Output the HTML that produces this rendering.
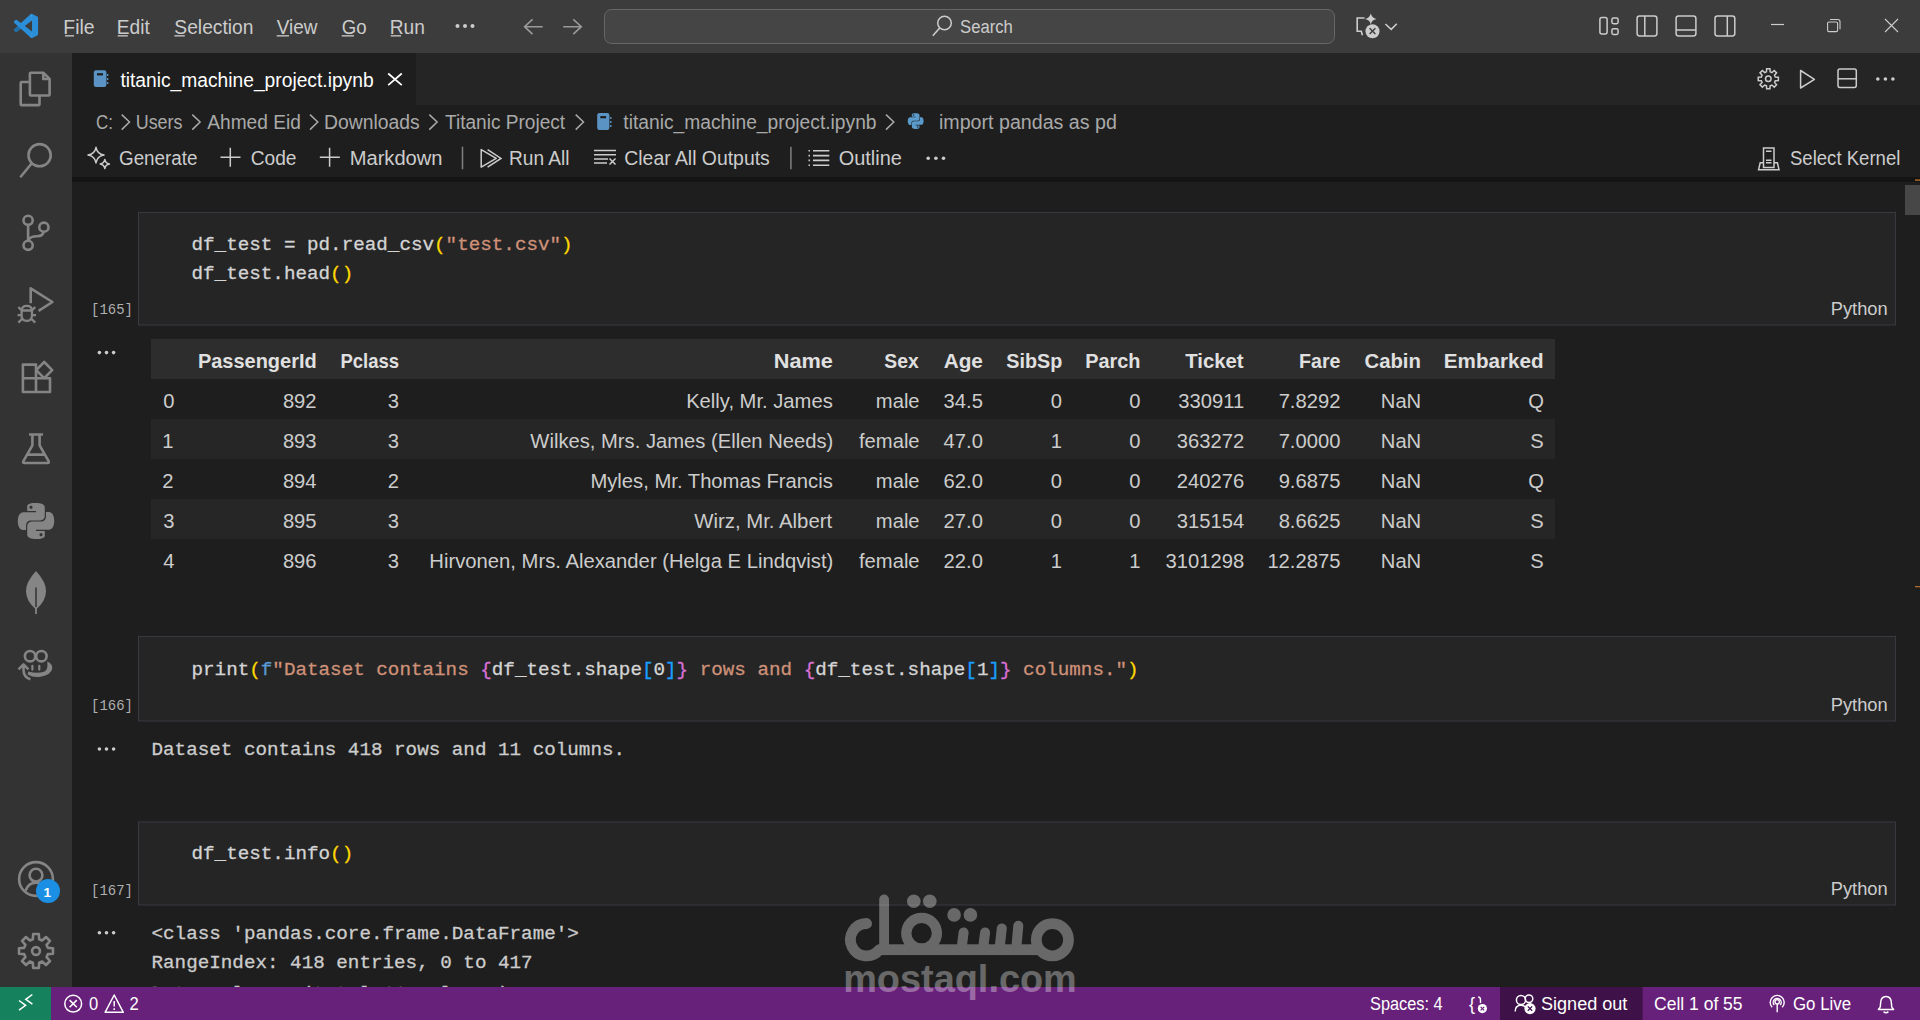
<!DOCTYPE html>
<html><head><meta charset="utf-8"><title>titanic_machine_project.ipynb</title>
<style>
html,body{margin:0;padding:0;width:1920px;height:1020px;overflow:hidden;background:#1e1e1e}
svg{position:absolute;left:0;top:0;display:block}
text{white-space:pre}
</style></head><body>
<svg width="1920" height="1020" viewBox="0 0 1920 1020">
<rect x="0" y="0" width="1920" height="53" fill="#3c3c3c"/>
<rect x="604.5" y="9.5" width="730" height="34" rx="7" fill="#454545" stroke="#676767" stroke-width="1"/>
<rect x="0" y="53" width="72" height="934" fill="#333333"/>
<rect x="72" y="53" width="1848" height="52" fill="#252526"/>
<rect x="72" y="53" width="344" height="52" fill="#1e1e1e"/>
<rect x="72" y="177" width="1848" height="5" fill="#141414"/>
<rect x="138.5" y="212.5" width="1757" height="112.5" fill="#252526" stroke="#3a3940" stroke-width="1"/>
<rect x="138.5" y="636.5" width="1757" height="84.5" fill="#252526" stroke="#3a3940" stroke-width="1"/>
<rect x="138.5" y="822.0" width="1757" height="83.0" fill="#252526" stroke="#3a3940" stroke-width="1"/>
<rect x="151" y="339" width="1404" height="40" fill="#2d2d2d"/>
<rect x="151" y="419" width="1404" height="40" fill="#262626"/>
<rect x="151" y="499" width="1404" height="40" fill="#262626"/>
<rect x="1905" y="185" width="15" height="30" fill="#474747"/>
<rect x="1915" y="179.4" width="5" height="1.4" fill="#b86e2c"/>
<rect x="1915" y="586" width="5" height="1.3" fill="#b06a2c"/>
<g font-family="Liberation Mono" font-size="19">
<text x="191.50" y="249.70" fill="#d4d4d4" stroke="#d4d4d4" stroke-width="0.3" textLength="242.55" lengthAdjust="spacingAndGlyphs">df_test = pd.read_csv</text>
<text x="434.05" y="249.70" fill="#ffd700" stroke="#ffd700" stroke-width="0.3" textLength="11.55" lengthAdjust="spacingAndGlyphs">(</text>
<text x="445.60" y="249.70" fill="#ce9178" stroke="#ce9178" stroke-width="0.3" textLength="115.50" lengthAdjust="spacingAndGlyphs">"test.csv"</text>
<text x="561.10" y="249.70" fill="#ffd700" stroke="#ffd700" stroke-width="0.3" textLength="11.55" lengthAdjust="spacingAndGlyphs">)</text>
<text x="191.50" y="278.70" fill="#d4d4d4" stroke="#d4d4d4" stroke-width="0.3" textLength="138.60" lengthAdjust="spacingAndGlyphs">df_test.head</text>
<text x="330.10" y="278.70" fill="#ffd700" stroke="#ffd700" stroke-width="0.3" textLength="23.10" lengthAdjust="spacingAndGlyphs">()</text>
<text x="191.50" y="674.70" fill="#d4d4d4" stroke="#d4d4d4" stroke-width="0.3" textLength="57.75" lengthAdjust="spacingAndGlyphs">print</text>
<text x="249.25" y="674.70" fill="#ffd700" stroke="#ffd700" stroke-width="0.3" textLength="11.55" lengthAdjust="spacingAndGlyphs">(</text>
<text x="260.80" y="674.70" fill="#569cd6" stroke="#569cd6" stroke-width="0.3" textLength="11.55" lengthAdjust="spacingAndGlyphs">f</text>
<text x="272.35" y="674.70" fill="#ce9178" stroke="#ce9178" stroke-width="0.3" textLength="207.90" lengthAdjust="spacingAndGlyphs">"Dataset contains </text>
<text x="480.25" y="674.70" fill="#da70d6" stroke="#da70d6" stroke-width="0.3" textLength="11.55" lengthAdjust="spacingAndGlyphs">{</text>
<text x="491.80" y="674.70" fill="#d4d4d4" stroke="#d4d4d4" stroke-width="0.3" textLength="150.15" lengthAdjust="spacingAndGlyphs">df_test.shape</text>
<text x="641.95" y="674.70" fill="#179fff" stroke="#179fff" stroke-width="0.3" textLength="11.55" lengthAdjust="spacingAndGlyphs">[</text>
<text x="653.50" y="674.70" fill="#d4d4d4" stroke="#d4d4d4" stroke-width="0.3" textLength="11.55" lengthAdjust="spacingAndGlyphs">0</text>
<text x="665.05" y="674.70" fill="#179fff" stroke="#179fff" stroke-width="0.3" textLength="11.55" lengthAdjust="spacingAndGlyphs">]</text>
<text x="676.60" y="674.70" fill="#da70d6" stroke="#da70d6" stroke-width="0.3" textLength="11.55" lengthAdjust="spacingAndGlyphs">}</text>
<text x="688.15" y="674.70" fill="#ce9178" stroke="#ce9178" stroke-width="0.3" textLength="115.50" lengthAdjust="spacingAndGlyphs"> rows and </text>
<text x="803.65" y="674.70" fill="#da70d6" stroke="#da70d6" stroke-width="0.3" textLength="11.55" lengthAdjust="spacingAndGlyphs">{</text>
<text x="815.20" y="674.70" fill="#d4d4d4" stroke="#d4d4d4" stroke-width="0.3" textLength="150.15" lengthAdjust="spacingAndGlyphs">df_test.shape</text>
<text x="965.35" y="674.70" fill="#179fff" stroke="#179fff" stroke-width="0.3" textLength="11.55" lengthAdjust="spacingAndGlyphs">[</text>
<text x="976.90" y="674.70" fill="#d4d4d4" stroke="#d4d4d4" stroke-width="0.3" textLength="11.55" lengthAdjust="spacingAndGlyphs">1</text>
<text x="988.45" y="674.70" fill="#179fff" stroke="#179fff" stroke-width="0.3" textLength="11.55" lengthAdjust="spacingAndGlyphs">]</text>
<text x="1000.00" y="674.70" fill="#da70d6" stroke="#da70d6" stroke-width="0.3" textLength="11.55" lengthAdjust="spacingAndGlyphs">}</text>
<text x="1011.55" y="674.70" fill="#ce9178" stroke="#ce9178" stroke-width="0.3" textLength="115.50" lengthAdjust="spacingAndGlyphs"> columns."</text>
<text x="1127.05" y="674.70" fill="#ffd700" stroke="#ffd700" stroke-width="0.3" textLength="11.55" lengthAdjust="spacingAndGlyphs">)</text>
<text x="191.50" y="859.20" fill="#d4d4d4" stroke="#d4d4d4" stroke-width="0.3" textLength="138.60" lengthAdjust="spacingAndGlyphs">df_test.info</text>
<text x="330.10" y="859.20" fill="#ffd700" stroke="#ffd700" stroke-width="0.3" textLength="23.10" lengthAdjust="spacingAndGlyphs">()</text>
<text x="151.50" y="755.20" fill="#cccccc" stroke="#cccccc" stroke-width="0.3" textLength="473.55" lengthAdjust="spacingAndGlyphs">Dataset contains 418 rows and 11 columns.</text>
<text x="151.50" y="938.80" fill="#cccccc" stroke="#cccccc" stroke-width="0.3" textLength="427.35" lengthAdjust="spacingAndGlyphs">&lt;class 'pandas.core.frame.DataFrame'&gt;</text>
<text x="151.50" y="967.60" fill="#cccccc" stroke="#cccccc" stroke-width="0.3" textLength="381.15" lengthAdjust="spacingAndGlyphs">RangeIndex: 418 entries, 0 to 417</text>
<text x="151.50" y="998.50" fill="#cccccc" stroke="#cccccc" stroke-width="0.3" textLength="369.60" lengthAdjust="spacingAndGlyphs">Data columns (total 11 columns):</text>
<text x="91.08" y="314.00" fill="#b0b0b0" font-size="14.5" textLength="41.82" lengthAdjust="spacingAndGlyphs">[165]</text>
<text x="91.08" y="710.00" fill="#b0b0b0" font-size="14.5" textLength="41.82" lengthAdjust="spacingAndGlyphs">[166]</text>
<text x="91.08" y="894.50" fill="#b0b0b0" font-size="14.5" textLength="41.82" lengthAdjust="spacingAndGlyphs">[167]</text>
</g>
<rect x="0" y="987" width="1920" height="33" fill="#68217a"/><rect x="0" y="987" width="51" height="33" fill="#16825d"/><rect x="1500" y="987" width="142.6" height="33" fill="#3e1148"/>
<g transform="translate(13.8,13.8) scale(0.243)"><path d="M96.46 10.8L75.86.87a6.23 6.23 0 0 0-7.1 1.2L29.33 38.04 12.15 25.01a4.16 4.16 0 0 0-5.32.24L1.3 30.25a4.16 4.16 0 0 0 0 6.16L16.2 50 1.3 63.59a4.16 4.16 0 0 0 0 6.16l5.52 5.02a4.16 4.16 0 0 0 5.32.24l17.18-13.03 39.43 35.97a6.23 6.23 0 0 0 7.1 1.2l20.6-9.92a6.24 6.24 0 0 0 3.54-5.62V16.42a6.24 6.24 0 0 0-3.54-5.62zM75.02 72.7L45.1 50l29.92-22.7v45.4z" fill="#2a8fd8"/><path d="M16.2 50 L1.3 63.59 a4.16 4.16 0 0 0 0 6.16 l5.52 5.02 a4.16 4.16 0 0 0 5.32.24 L29.33 61.96 Z" fill="#000" opacity="0.22"/><path d="M75.86.87 L68.76 2.07 L75.02 27.3 V72.7 L68.76 97.93 L75.86 99.13 Z" fill="#fff" opacity="0.08"/></g>
<circle cx="457.5" cy="26" r="2" fill="#cccccc"/>
<circle cx="465" cy="26" r="2" fill="#cccccc"/>
<circle cx="472.5" cy="26" r="2" fill="#cccccc"/>
<rect x="65.0" y="35.2" width="9.0" height="1.3" fill="#cccccc"/>
<rect x="117.7" y="35.2" width="10.1" height="1.3" fill="#cccccc"/>
<rect x="174.4" y="35.2" width="10.4" height="1.3" fill="#cccccc"/>
<rect x="276.7" y="35.2" width="12.3" height="1.3" fill="#cccccc"/>
<rect x="341.7" y="35.2" width="12.3" height="1.3" fill="#cccccc"/>
<rect x="390.7" y="35.2" width="10.3" height="1.3" fill="#cccccc"/>
<path d="M532.5 19.3 L524.6 26.7 L532.5 34.2 M524.6 26.7 H542.7" stroke="#9a9a9a" stroke-width="1.6" fill="none"/>
<path d="M573.3 19.3 L581.3 26.7 L573.3 34.2 M581.3 26.7 H563.2" stroke="#9a9a9a" stroke-width="1.6" fill="none"/>
<circle cx="944.5" cy="23" r="6.8" stroke="#cccccc" stroke-width="1.5" fill="none"/><path d="M939.7 28 L932.8 35.8" stroke="#cccccc" stroke-width="1.6" fill="none"/>
<path d="M1364.5 18 H1357.2 V31.3 H1361.3 L1362.4 35.3" stroke="#cccccc" stroke-width="1.6" fill="none"/>
<path d="M1370.8 13.2 Q1371.6 18.1 1376.6 18.9 Q1371.6 19.7 1370.8 24.6 Q1370 19.7 1365 18.9 Q1370 18.1 1370.8 13.2Z" fill="#cccccc"/>
<circle cx="1372.5" cy="31.2" r="7" fill="#cccccc"/><path d="M1369.6 28.3 L1375.4 34.1 M1375.4 28.3 L1369.6 34.1" stroke="#3c3c3c" stroke-width="1.4"/>
<path d="M1385.4 24 L1391.2 29.4 L1396.8 23.7" stroke="#cccccc" stroke-width="1.5" fill="none"/>
<rect x="1599.9" y="17.6" width="7.2" height="16.4" rx="2" stroke="#cccccc" stroke-width="1.5" fill="none"/>
<rect x="1611.9" y="18.1" width="6.2" height="5.6" rx="1.6" stroke="#cccccc" stroke-width="1.5" fill="none"/>
<rect x="1611.9" y="28.8" width="6.2" height="5.6" rx="1.6" stroke="#cccccc" stroke-width="1.5" fill="none"/>
<rect x="1637.1" y="16.1" width="19.8" height="19.8" rx="2.4" stroke="#cccccc" stroke-width="1.5" fill="none"/><path d="M1644.8 16.1 V35.9" stroke="#cccccc" stroke-width="1.5" fill="none"/>
<rect x="1676.1" y="16.1" width="19.8" height="19.8" rx="2.4" stroke="#cccccc" stroke-width="1.5" fill="none"/><path d="M1676.1 30 H1695.9" stroke="#cccccc" stroke-width="1.5" fill="none"/>
<rect x="1715" y="16.1" width="19.8" height="19.8" rx="2.4" stroke="#cccccc" stroke-width="1.5" fill="none"/><path d="M1727.3 16.1 V35.9" stroke="#cccccc" stroke-width="1.5" fill="none"/>
<path d="M1771 24.5 H1784" stroke="#cccccc" stroke-width="1.2"/>
<rect x="1827.6" y="22" width="10" height="9.6" rx="1.3" stroke="#cccccc" stroke-width="1.1" fill="none"/><path d="M1830 19.5 H1837.8 Q1840 19.5 1840 21.7 V29.3" stroke="#cccccc" stroke-width="1.1" fill="none"/>
<path d="M1885 19 L1898 32 M1898 19 L1885 32" stroke="#cccccc" stroke-width="1.1"/>
<path d="M28.9 82 H21.6 Q20.7 82 20.7 83 V104.2 Q20.7 105.1 21.6 105.1 H38.6 Q39.5 105.1 39.5 104.2 V96" stroke="#858585" stroke-width="2.6" fill="none" stroke-linejoin="round"/>
<path d="M30.8 72.8 H43.6 L49.6 78.8 V94.5 Q49.6 95.5 48.6 95.5 H30.8 Q29.9 95.5 29.9 94.5 V73.8 Q29.9 72.8 30.8 72.8Z M43.3 72.8 V79 H49.6" stroke="#858585" stroke-width="2.6" fill="none" stroke-linejoin="round"/>
<circle cx="39.6" cy="155.2" r="11.1" stroke="#858585" stroke-width="2.6" fill="none" stroke-linejoin="round"/><path d="M31.6 163.5 L20.3 177.3" stroke="#858585" stroke-width="2.6" fill="none" stroke-linejoin="round"/>
<circle cx="28.1" cy="220.3" r="4.6" stroke="#858585" stroke-width="2.6" fill="none" stroke-linejoin="round"/><circle cx="43.9" cy="227.2" r="4.6" stroke="#858585" stroke-width="2.6" fill="none" stroke-linejoin="round"/><circle cx="28.1" cy="245.3" r="4.6" stroke="#858585" stroke-width="2.6" fill="none" stroke-linejoin="round"/>
<path d="M28.1 224.9 V240.7 M43.6 231.8 Q43 236.2 37 236.2 Q30 236.2 28.5 240.2" stroke="#858585" stroke-width="2.6" fill="none" stroke-linejoin="round"/>
<path d="M30.7 303.2 V288.3 L52.4 302 L38.6 310.8" stroke="#858585" stroke-width="2.6" fill="none" stroke-linejoin="round"/>
<path d="M21.8 310.5 Q21.8 305.9 26.8 305.9 Q31.8 305.9 31.8 310.5 M26.8 320.9 Q21.2 320.9 21.6 314.4 L21.7 310.5 H31.9 L32 314.4 Q32.3 320.9 26.8 320.9Z M18.4 307 L21.6 310.4 M35.2 307 L32 310.4 M17.6 315.2 H21.6 M32 315.2 H36 M18.4 322.6 L22.2 318.8 M35.2 322.6 L31.4 318.8" stroke="#858585" stroke-width="2.3" fill="none"/>
<path d="M22.9 364.6 H36 V392 H22.9Z M22.9 378.3 H50 V392 H36" stroke="#858585" stroke-width="2.6" fill="none" stroke-linejoin="round"/>
<path d="M44.2 362 L52.2 370.1 L44.2 378.1 L36.2 370.1Z" stroke="#858585" stroke-width="2.6" fill="none" stroke-linejoin="round"/>
<path d="M29 434.5 H43 M32.4 434.5 V445.3 L23.4 461.2 Q22.5 463 24.5 463 H47.5 Q49.5 463 48.6 461.2 L39.6 445.3 V434.5 M26.6 454.6 H45.5" stroke="#858585" stroke-width="2.6" fill="none" stroke-linejoin="round"/>
<g transform="translate(17.9,502.9) scale(1.5083)"><path d="M14.25.18l.9.2.73.26.59.3.45.32.34.34.25.34.16.33.1.3.04.26.02.2-.01.13V8.5l-.05.63-.13.55-.21.46-.26.38-.3.31-.33.25-.35.19-.35.14-.33.1-.3.07-.26.04-.21.02H8.77l-.69.05-.59.14-.5.22-.41.27-.33.32-.27.35-.2.36-.15.37-.1.35-.07.32-.04.27-.02.21v3.06H3.17l-.21-.03-.28-.07-.32-.12-.35-.18-.36-.26-.36-.36-.35-.46-.32-.59-.28-.73-.21-.88-.14-1.05-.05-1.23.06-1.22.16-1.04.24-.87.32-.71.36-.57.4-.44.42-.33.42-.24.4-.16.36-.1.32-.05.24-.01h.16l.06.01h8.16v-.83H6.18l-.01-2.75-.02-.37.05-.34.11-.31.17-.28.25-.26.31-.23.38-.2.44-.18.51-.15.58-.12.64-.1.71-.06.77-.04.84-.02 1.27.05zm-6.3 1.98l-.23.33-.08.41.08.41.23.34.33.22.41.09.41-.09.33-.22.23-.34.08-.41-.08-.41-.23-.33-.33-.22-.41-.09-.41.09zm13.09 3.95l.28.06.32.12.35.18.36.27.36.35.35.47.32.59.28.73.21.88.14 1.04.05 1.23-.06 1.23-.16 1.04-.24.86-.32.71-.36.57-.4.45-.42.33-.42.24-.4.16-.36.09-.32.05-.24.02-.16-.01h-8.22v.82h5.84l.01 2.76.02.36-.05.34-.11.31-.17.29-.25.25-.31.24-.38.2-.44.17-.51.15-.58.13-.64.09-.71.07-.77.04-.84.01-1.27-.04-1.07-.14-.9-.2-.73-.25-.59-.3-.45-.33-.34-.34-.25-.34-.16-.33-.1-.3-.04-.25-.02-.2.01-.13v-5.34l.05-.64.13-.54.21-.46.26-.38.3-.32.33-.24.35-.2.35-.14.33-.1.3-.06.26-.04.21-.02.13-.01h5.84l.69-.05.59-.14.5-.21.41-.28.33-.32.27-.35.2-.36.15-.36.1-.35.07-.32.04-.28.02-.21V6.07h2.09l.14.01zm-6.47 14.25l-.23.33-.08.41.08.41.23.33.33.23.41.08.41-.08.33-.23.23-.33.08-.41-.08-.41-.23-.33-.33-.23-.41-.08-.41.08z" fill="#858585"/></g>
<path d="M36 571.1 Q46.2 582 46 591.5 Q45.7 601 36.6 608.9 H35.4 Q26.3 601 26 591.5 Q25.8 582 36 571.1Z" fill="#858585"/><path d="M36 587.5 V607.5" stroke="#333333" stroke-width="1.5"/><path d="M36 607 V614" stroke="#858585" stroke-width="1.8"/>
<circle cx="30.1" cy="656.2" r="5.2" stroke="#858585" stroke-width="2.6" fill="none" stroke-linejoin="round"/><circle cx="41.4" cy="656.2" r="5.2" stroke="#858585" stroke-width="2.6" fill="none" stroke-linejoin="round"/>
<path d="M47.2 661.4 Q52.8 663.6 52.2 668.6 Q51.4 674.8 40.5 676.8 Q33.5 677.8 27.6 674.4 L28.4 671.6 Q37.5 674.2 44.6 671.4 Q48.4 669.4 47.2 661.4Z" fill="#858585"/>
<path d="M32.4 665.8 V669.6 M39.3 665.8 V669.6" stroke="#858585" stroke-width="2.2" stroke-linecap="round"/>
<path d="M18.6 669.4 L23.5 664.4 L28.4 669.4 M23.5 665 V670 Q23.8 677.6 30.4 679.2" stroke="#858585" stroke-width="2.6" fill="none" stroke-linejoin="round"/>
<circle cx="36" cy="879" r="16.9" stroke="#858585" stroke-width="2.6" fill="none" stroke-linejoin="round"/><circle cx="36" cy="875.2" r="6.4" stroke="#858585" stroke-width="2.6" fill="none" stroke-linejoin="round"/><path d="M25.5 890.7 Q28.5 882.6 36 882.6 Q43.5 882.6 46.5 890.7" stroke="#858585" stroke-width="2.6" fill="none" stroke-linejoin="round"/>
<circle cx="48" cy="891" r="12" fill="#1a8fe3"/>
<path d="M32.87 939.21 L33.18 934.03 L38.82 934.03 L39.13 939.21 L42.13 940.45 L46.00 937.01 L49.99 941.00 L46.55 944.87 L47.79 947.87 L52.97 948.18 L52.97 953.82 L47.79 954.13 L46.55 957.13 L49.99 961.00 L46.00 964.99 L42.13 961.55 L39.13 962.79 L38.82 967.97 L33.18 967.97 L32.87 962.79 L29.87 961.55 L26.00 964.99 L22.01 961.00 L25.45 957.13 L24.21 954.13 L19.03 953.82 L19.03 948.18 L24.21 947.87 L25.45 944.87 L22.01 941.00 L26.00 937.01 L29.87 940.45 Z" stroke="#858585" stroke-width="2.6" fill="none" stroke-linejoin="round"/><circle cx="36" cy="951" r="3.9" stroke="#858585" stroke-width="2.6" fill="none" stroke-linejoin="round"/>
<rect x="93.8" y="70.2" width="12.6" height="16.8" rx="2.2" fill="#5a93c4"/><rect x="97" y="73.2" width="6" height="2.2" fill="#1e1e1e"/>
<path d="M107.6 74 V76 M107.6 78 V80 M107.6 82 V84" stroke="#5a93c4" stroke-width="1.4"/>
<path d="M388.2 73.5 L401.8 85.1 M401.8 73.5 L388.2 85.1" stroke="#ffffff" stroke-width="1.7"/>
<path d="M1766.45 71.84 L1766.63 68.74 L1769.97 68.74 L1770.15 71.84 L1771.92 72.57 L1774.23 70.50 L1776.60 72.87 L1774.53 75.18 L1775.26 76.95 L1778.36 77.13 L1778.36 80.47 L1775.26 80.65 L1774.53 82.42 L1776.60 84.73 L1774.23 87.10 L1771.92 85.03 L1770.15 85.76 L1769.97 88.86 L1766.63 88.86 L1766.45 85.76 L1764.68 85.03 L1762.37 87.10 L1760.00 84.73 L1762.07 82.42 L1761.34 80.65 L1758.24 80.47 L1758.24 77.13 L1761.34 76.95 L1762.07 75.18 L1760.00 72.87 L1762.37 70.50 L1764.68 72.57 Z" stroke="#cccccc" stroke-width="1.5" fill="none"/><circle cx="1768.3" cy="78.8" r="2.8" stroke="#cccccc" stroke-width="1.5" fill="none"/>
<path d="M1800.6 70.5 L1814.4 79.3 L1800.6 88 Z" stroke="#cccccc" stroke-width="1.5" fill="none" stroke-linejoin="round"/>
<rect x="1838" y="69.1" width="18.3" height="18.3" rx="1.8" stroke="#cccccc" stroke-width="1.5" fill="none"/><path d="M1838 78.8 H1856.3" stroke="#cccccc" stroke-width="1.5"/>
<circle cx="1877.8" cy="79" r="1.8" fill="#cccccc"/>
<circle cx="1885.4" cy="79" r="1.8" fill="#cccccc"/>
<circle cx="1892.9" cy="79" r="1.8" fill="#cccccc"/>
<path d="M121.7 114.6 L129.5 122 L121.7 129.6" stroke="#a9a9a9" stroke-width="1.5" fill="none"/>
<path d="M192.3 114.6 L200.1 122 L192.3 129.6" stroke="#a9a9a9" stroke-width="1.5" fill="none"/>
<path d="M310.0 114.6 L317.8 122 L310.0 129.6" stroke="#a9a9a9" stroke-width="1.5" fill="none"/>
<path d="M429.3 114.6 L437.1 122 L429.3 129.6" stroke="#a9a9a9" stroke-width="1.5" fill="none"/>
<path d="M575.7 114.6 L583.5 122 L575.7 129.6" stroke="#a9a9a9" stroke-width="1.5" fill="none"/>
<path d="M886.0 114.6 L893.8 122 L886.0 129.6" stroke="#a9a9a9" stroke-width="1.5" fill="none"/>
<rect x="597.2" y="112.9" width="12.2" height="17" rx="2.2" fill="#5a93c4"/><rect x="600.3" y="116.1" width="5.8" height="2.2" fill="#1e1e1e"/>
<path d="M610.8 117 V119 M610.8 121 V123 M610.8 125 V127" stroke="#5a93c4" stroke-width="1.4"/>
<g transform="translate(907.8,113.2) scale(0.655)"><path d="M14.25.18l.9.2.73.26.59.3.45.32.34.34.25.34.16.33.1.3.04.26.02.2-.01.13V8.5l-.05.63-.13.55-.21.46-.26.38-.3.31-.33.25-.35.19-.35.14-.33.1-.3.07-.26.04-.21.02H8.77l-.69.05-.59.14-.5.22-.41.27-.33.32-.27.35-.2.36-.15.37-.1.35-.07.32-.04.27-.02.21v3.06H3.17l-.21-.03-.28-.07-.32-.12-.35-.18-.36-.26-.36-.36-.35-.46-.32-.59-.28-.73-.21-.88-.14-1.05-.05-1.23.06-1.22.16-1.04.24-.87.32-.71.36-.57.4-.44.42-.33.42-.24.4-.16.36-.1.32-.05.24-.01h.16l.06.01h8.16v-.83H6.18l-.01-2.75-.02-.37.05-.34.11-.31.17-.28.25-.26.31-.23.38-.2.44-.18.51-.15.58-.12.64-.1.71-.06.77-.04.84-.02 1.27.05zm-6.3 1.98l-.23.33-.08.41.08.41.23.34.33.22.41.09.41-.09.33-.22.23-.34.08-.41-.08-.41-.23-.33-.33-.22-.41-.09-.41.09zm13.09 3.95l.28.06.32.12.35.18.36.27.36.35.35.47.32.59.28.73.21.88.14 1.04.05 1.23-.06 1.23-.16 1.04-.24.86-.32.71-.36.57-.4.45-.42.33-.42.24-.4.16-.36.09-.32.05-.24.02-.16-.01h-8.22v.82h5.84l.01 2.76.02.36-.05.34-.11.31-.17.29-.25.25-.31.24-.38.2-.44.17-.51.15-.58.13-.64.09-.71.07-.77.04-.84.01-1.27-.04-1.07-.14-.9-.2-.73-.25-.59-.3-.45-.33-.34-.34-.25-.34-.16-.33-.1-.3-.04-.25-.02-.2.01-.13v-5.34l.05-.64.13-.54.21-.46.26-.38.3-.32.33-.24.35-.2.35-.14.33-.1.3-.06.26-.04.21-.02.13-.01h5.84l.69-.05.59-.14.5-.21.41-.28.33-.32.27-.35.2-.36.15-.36.1-.35.07-.32.04-.28.02-.21V6.07h2.09l.14.01zm-6.47 14.25l-.23.33-.08.41.08.41.23.33.33.23.41.08.41-.08.33-.23.23-.33.08-.41-.08-.41-.23-.33-.33-.23-.41-.08-.41.08z" fill="#5a9bcc"/></g>
<path d="M96 147.3 Q97.2 153.9 104 155.1 Q97.2 156.3 96 162.9 Q94.8 156.3 88 155.1 Q94.8 153.9 96 147.3Z" stroke="#cccccc" stroke-width="1.5" fill="none" stroke-linejoin="round"/>
<path d="M104.8 159.4 Q105.4 163.3 109.4 164 Q105.4 164.7 104.8 168.6 Q104.2 164.7 100.2 164 Q104.2 163.3 104.8 159.4Z" stroke="#cccccc" stroke-width="1.5" fill="none" stroke-linejoin="round"/>
<path d="M230.3 147.7 V166.7 M220.5 157.2 H240.5" stroke="#cccccc" stroke-width="1.5"/>
<path d="M329.6 147.7 V166.7 M319.8 157.2 H339.8" stroke="#cccccc" stroke-width="1.5"/>
<path d="M462.5 146.7 V169.3" stroke="#808080" stroke-width="1.5"/>
<path d="M790.9 146.7 V169.3" stroke="#808080" stroke-width="1.5"/>
<path d="M481.2 149.6 L496.2 158.4 L481.2 167.2 Z" stroke="#cccccc" stroke-width="1.5" fill="none" stroke-linejoin="round"/><path d="M487.6 149.6 L501 158.4 L487.6 167.2" stroke="#cccccc" stroke-width="1.5" fill="none"/>
<path d="M594 150.5 H616 M594 154.7 H616 M594 158.9 H608 M594 163.1 H607 M609.5 158.5 L615.5 164.5 M615.5 158.5 L609.5 164.5" stroke="#cccccc" stroke-width="1.5" fill="none"/>
<path d="M808.5 150.8 H810 M813 150.8 H829.3 M808.5 155.6 H810 M813 155.6 H829.3 M808.5 160.4 H810 M813 160.4 H829.3 M808.5 165.2 H810 M813 165.2 H829.3" stroke="#cccccc" stroke-width="1.6"/>
<circle cx="928.2" cy="158.3" r="1.8" fill="#cccccc"/>
<circle cx="935.9" cy="158.3" r="1.8" fill="#cccccc"/>
<circle cx="943.5" cy="158.3" r="1.8" fill="#cccccc"/>
<path d="M1763.5 148 H1774 V167.5 H1763.5 Z M1766 151.2 H1771.5 M1766 160.2 H1771.5 M1766 162.8 H1771.5 M1763.5 162.8 H1760.2 L1758.6 169.7 H1779 L1777.4 162.8 H1774" stroke="#cccccc" stroke-width="1.5" fill="none"/>
<circle cx="99.4" cy="352.6" r="1.8" fill="#cccccc"/>
<circle cx="106.5" cy="352.6" r="1.8" fill="#cccccc"/>
<circle cx="113.6" cy="352.6" r="1.8" fill="#cccccc"/>
<circle cx="99.4" cy="749" r="1.8" fill="#cccccc"/>
<circle cx="106.5" cy="749" r="1.8" fill="#cccccc"/>
<circle cx="113.6" cy="749" r="1.8" fill="#cccccc"/>
<circle cx="99.4" cy="932.7" r="1.8" fill="#cccccc"/>
<circle cx="106.5" cy="932.7" r="1.8" fill="#cccccc"/>
<circle cx="113.6" cy="932.7" r="1.8" fill="#cccccc"/>
<path d="M19 1000.5 L25.6 1005.3 L19 1010.2 M32.4 994.5 L25.8 999.3 L32.4 1004.1" stroke="#ffffff" stroke-width="1.5" fill="none"/>
<circle cx="73.2" cy="1003.7" r="8.4" stroke="#ffffff" stroke-width="1.5" fill="none"/><path d="M69.6 1000.1 L76.8 1007.3 M76.8 1000.1 L69.6 1007.3" stroke="#ffffff" stroke-width="1.5"/>
<path d="M114.2 995 L123.3 1012.3 H105.1 Z" stroke="#ffffff" stroke-width="1.5" fill="none" stroke-linejoin="round"/><path d="M114.2 1001 V1006.5 M114.2 1008.3 V1010" stroke="#ffffff" stroke-width="1.5"/>
<text x="1469" y="1010.4" font-family="Liberation Sans" font-size="18" fill="#ffffff">{</text><path d="M1478.2 997 Q1480.5 997 1480.5 1000 V1003" stroke="#ffffff" stroke-width="1.4" fill="none"/><circle cx="1482.4" cy="1008.6" r="4.6" fill="#ffffff"/><path d="M1480.6 1006.8 L1484.2 1010.4 M1484.2 1006.8 L1480.6 1010.4" stroke="#68217a" stroke-width="1.2"/>
<circle cx="1521" cy="1000" r="4.6" stroke="#ffffff" stroke-width="1.5" fill="none"/><circle cx="1529" cy="998.8" r="3.8" stroke="#ffffff" stroke-width="1.5" fill="none"/><path d="M1515.2 1011.5 Q1515.2 1005.2 1521 1005.2 Q1524 1005.2 1525.5 1007" stroke="#ffffff" stroke-width="1.5" fill="none"/><circle cx="1530" cy="1008.6" r="5.6" fill="#ffffff"/><path d="M1527.8 1006.4 L1532.2 1010.8 M1532.2 1006.4 L1527.8 1010.8" stroke="#3b1050" stroke-width="1.3"/>
<circle cx="1777.2" cy="1001.8" r="2.2" stroke="#ffffff" stroke-width="1.4" fill="none"/><path d="M1772.2 1007.3 A7 7 0 1 1 1782.2 1007.3 M1774.2 1005 A4 4 0 1 1 1780.2 1005 M1777.2 1004 V1012.2" stroke="#ffffff" stroke-width="1.4" fill="none"/>
<path d="M1880 1007.5 Q1880.5 1006.5 1880.5 1004 Q1880.5 996.5 1886 996.5 Q1891.5 996.5 1891.5 1004 Q1891.5 1006.5 1892 1007.5 L1893.6 1009.5 H1878.4Z M1883.6 1011.6 Q1886 1014 1888.4 1011.6" stroke="#ffffff" stroke-width="1.5" fill="none" stroke-linejoin="round"/>
<text x="43.6" y="897" font-family="Liberation Sans" font-weight="bold" font-size="13.5" fill="#ffffff">1</text>
<text x="63.31" y="33.75" font-family='Liberation Sans' font-size="19.5" font-weight="normal" fill="#cccccc" textLength="31.23" lengthAdjust="spacingAndGlyphs">File</text>
<text x="116.72" y="33.75" font-family='Liberation Sans' font-size="19.5" font-weight="normal" fill="#cccccc" textLength="33.01" lengthAdjust="spacingAndGlyphs">Edit</text>
<text x="174.30" y="33.75" font-family='Liberation Sans' font-size="19.5" font-weight="normal" fill="#cccccc" textLength="79.23" lengthAdjust="spacingAndGlyphs">Selection</text>
<text x="276.70" y="33.75" font-family='Liberation Sans' font-size="19.5" font-weight="normal" fill="#cccccc" textLength="40.71" lengthAdjust="spacingAndGlyphs">View</text>
<text x="341.70" y="33.75" font-family='Liberation Sans' font-size="19.5" font-weight="normal" fill="#cccccc" textLength="24.85" lengthAdjust="spacingAndGlyphs">Go</text>
<text x="389.72" y="33.75" font-family='Liberation Sans' font-size="19.5" font-weight="normal" fill="#cccccc" textLength="35.11" lengthAdjust="spacingAndGlyphs">Run</text>
<text x="960.10" y="32.90" font-family='Liberation Sans' font-size="18" font-weight="normal" fill="#cccccc" textLength="52.73" lengthAdjust="spacingAndGlyphs">Search</text>
<text x="120.40" y="87.00" font-family='Liberation Sans' font-size="19.5" font-weight="normal" fill="#ffffff" textLength="253.20" lengthAdjust="spacingAndGlyphs">titanic_machine_project.ipynb</text>
<text x="96.00" y="129.30" font-family='Liberation Sans' font-size="19.5" font-weight="normal" fill="#a9a9a9" textLength="16.93" lengthAdjust="spacingAndGlyphs">C:</text>
<text x="135.78" y="129.30" font-family='Liberation Sans' font-size="19.5" font-weight="normal" fill="#a9a9a9" textLength="46.69" lengthAdjust="spacingAndGlyphs">Users</text>
<text x="207.30" y="129.30" font-family='Liberation Sans' font-size="19.5" font-weight="normal" fill="#a9a9a9" textLength="93.53" lengthAdjust="spacingAndGlyphs">Ahmed Eid</text>
<text x="324.01" y="129.30" font-family='Liberation Sans' font-size="19.5" font-weight="normal" fill="#a9a9a9" textLength="95.74" lengthAdjust="spacingAndGlyphs">Downloads</text>
<text x="445.00" y="129.30" font-family='Liberation Sans' font-size="19.5" font-weight="normal" fill="#a9a9a9" textLength="120.13" lengthAdjust="spacingAndGlyphs">Titanic Project</text>
<text x="623.30" y="129.30" font-family='Liberation Sans' font-size="19.5" font-weight="normal" fill="#a9a9a9" textLength="253.25" lengthAdjust="spacingAndGlyphs">titanic_machine_project.ipynb</text>
<text x="938.99" y="129.30" font-family='Liberation Sans' font-size="19.5" font-weight="normal" fill="#a9a9a9" textLength="177.86" lengthAdjust="spacingAndGlyphs">import pandas as pd</text>
<text x="119.00" y="164.90" font-family='Liberation Sans' font-size="19.5" font-weight="normal" fill="#cccccc" textLength="78.52" lengthAdjust="spacingAndGlyphs">Generate</text>
<text x="250.70" y="164.90" font-family='Liberation Sans' font-size="19.5" font-weight="normal" fill="#cccccc" textLength="45.83" lengthAdjust="spacingAndGlyphs">Code</text>
<text x="349.67" y="164.90" font-family='Liberation Sans' font-size="19.5" font-weight="normal" fill="#cccccc" textLength="92.91" lengthAdjust="spacingAndGlyphs">Markdown</text>
<text x="509.04" y="164.90" font-family='Liberation Sans' font-size="19.5" font-weight="normal" fill="#cccccc" textLength="60.58" lengthAdjust="spacingAndGlyphs">Run All</text>
<text x="624.30" y="164.90" font-family='Liberation Sans' font-size="19.5" font-weight="normal" fill="#cccccc" textLength="145.45" lengthAdjust="spacingAndGlyphs">Clear All Outputs</text>
<text x="838.70" y="164.90" font-family='Liberation Sans' font-size="19.5" font-weight="normal" fill="#cccccc" textLength="63.16" lengthAdjust="spacingAndGlyphs">Outline</text>
<text x="1790.00" y="164.90" font-family='Liberation Sans' font-size="19.5" font-weight="normal" fill="#cccccc" textLength="110.32" lengthAdjust="spacingAndGlyphs">Select Kernel</text>
<text x="1830.68" y="315.00" font-family='Liberation Sans' font-size="18" font-weight="normal" fill="#cccccc" textLength="57.05" lengthAdjust="spacingAndGlyphs">Python</text>
<text x="1830.68" y="711.00" font-family='Liberation Sans' font-size="18" font-weight="normal" fill="#cccccc" textLength="57.05" lengthAdjust="spacingAndGlyphs">Python</text>
<text x="1830.68" y="895.00" font-family='Liberation Sans' font-size="18" font-weight="normal" fill="#cccccc" textLength="57.05" lengthAdjust="spacingAndGlyphs">Python</text>
<text x="89.00" y="1009.80" font-family='Liberation Sans' font-size="18" font-weight="normal" fill="#ffffff" textLength="9.21" lengthAdjust="spacingAndGlyphs">0</text>
<text x="129.40" y="1009.80" font-family='Liberation Sans' font-size="18" font-weight="normal" fill="#ffffff" textLength="9.21" lengthAdjust="spacingAndGlyphs">2</text>
<text x="1370.00" y="1009.80" font-family='Liberation Sans' font-size="18" font-weight="normal" fill="#ffffff" textLength="72.61" lengthAdjust="spacingAndGlyphs">Spaces: 4</text>
<text x="1541.00" y="1009.80" font-family='Liberation Sans' font-size="18" font-weight="normal" fill="#ffffff" textLength="86.40" lengthAdjust="spacingAndGlyphs">Signed out</text>
<text x="1654.00" y="1009.80" font-family='Liberation Sans' font-size="18" font-weight="normal" fill="#ffffff" textLength="88.61" lengthAdjust="spacingAndGlyphs">Cell 1 of 55</text>
<text x="1793.00" y="1009.80" font-family='Liberation Sans' font-size="18" font-weight="normal" fill="#ffffff" textLength="58.01" lengthAdjust="spacingAndGlyphs">Go Live</text>
<text x="197.93" y="368.20" font-family="Liberation Sans" font-size="20.5" font-weight="bold" fill="#e0e0e0" textLength="118.78" lengthAdjust="spacingAndGlyphs">PassengerId</text>
<text x="340.40" y="368.20" font-family="Liberation Sans" font-size="20.5" font-weight="bold" fill="#e0e0e0" textLength="58.67" lengthAdjust="spacingAndGlyphs">Pclass</text>
<text x="773.74" y="368.20" font-family="Liberation Sans" font-size="20.5" font-weight="bold" fill="#e0e0e0" textLength="59.19" lengthAdjust="spacingAndGlyphs">Name</text>
<text x="884.30" y="368.20" font-family="Liberation Sans" font-size="20.5" font-weight="bold" fill="#e0e0e0" textLength="34.34" lengthAdjust="spacingAndGlyphs">Sex</text>
<text x="943.70" y="368.20" font-family="Liberation Sans" font-size="20.5" font-weight="bold" fill="#e0e0e0" textLength="39.21" lengthAdjust="spacingAndGlyphs">Age</text>
<text x="1006.30" y="368.20" font-family="Liberation Sans" font-size="20.5" font-weight="bold" fill="#e0e0e0" textLength="55.90" lengthAdjust="spacingAndGlyphs">SibSp</text>
<text x="1085.23" y="368.20" font-family="Liberation Sans" font-size="20.5" font-weight="bold" fill="#e0e0e0" textLength="55.28" lengthAdjust="spacingAndGlyphs">Parch</text>
<text x="1185.20" y="368.20" font-family="Liberation Sans" font-size="20.5" font-weight="bold" fill="#e0e0e0" textLength="58.43" lengthAdjust="spacingAndGlyphs">Ticket</text>
<text x="1299.05" y="368.20" font-family="Liberation Sans" font-size="20.5" font-weight="bold" fill="#e0e0e0" textLength="41.34" lengthAdjust="spacingAndGlyphs">Fare</text>
<text x="1364.50" y="368.20" font-family="Liberation Sans" font-size="20.5" font-weight="bold" fill="#e0e0e0" textLength="56.42" lengthAdjust="spacingAndGlyphs">Cabin</text>
<text x="1443.89" y="368.20" font-family="Liberation Sans" font-size="20.5" font-weight="bold" fill="#e0e0e0" textLength="99.63" lengthAdjust="spacingAndGlyphs">Embarked</text>
<text x="163.20" y="408.20" font-family="Liberation Sans" font-size="20.5" font-weight="normal" fill="#cccccc" textLength="11.23" lengthAdjust="spacingAndGlyphs">0</text>
<text x="282.90" y="408.20" font-family="Liberation Sans" font-size="20.5" font-weight="normal" fill="#cccccc" textLength="33.69" lengthAdjust="spacingAndGlyphs">892</text>
<text x="387.87" y="408.20" font-family="Liberation Sans" font-size="20.5" font-weight="normal" fill="#cccccc" textLength="11.23" lengthAdjust="spacingAndGlyphs">3</text>
<text x="686.13" y="408.20" font-family="Liberation Sans" font-size="20.5" font-weight="normal" fill="#cccccc" textLength="146.61" lengthAdjust="spacingAndGlyphs">Kelly, Mr. James</text>
<text x="875.83" y="408.20" font-family="Liberation Sans" font-size="20.5" font-weight="normal" fill="#cccccc" textLength="43.77" lengthAdjust="spacingAndGlyphs">male</text>
<text x="943.59" y="408.20" font-family="Liberation Sans" font-size="20.5" font-weight="normal" fill="#cccccc" textLength="39.30" lengthAdjust="spacingAndGlyphs">34.5</text>
<text x="1050.87" y="408.20" font-family="Liberation Sans" font-size="20.5" font-weight="normal" fill="#cccccc" textLength="11.23" lengthAdjust="spacingAndGlyphs">0</text>
<text x="1129.16" y="408.20" font-family="Liberation Sans" font-size="20.5" font-weight="normal" fill="#cccccc" textLength="11.23" lengthAdjust="spacingAndGlyphs">0</text>
<text x="1178.31" y="408.20" font-family="Liberation Sans" font-size="20.5" font-weight="normal" fill="#cccccc" textLength="65.88" lengthAdjust="spacingAndGlyphs">330911</text>
<text x="1278.63" y="408.20" font-family="Liberation Sans" font-size="20.5" font-weight="normal" fill="#cccccc" textLength="61.76" lengthAdjust="spacingAndGlyphs">7.8292</text>
<text x="1380.80" y="408.20" font-family="Liberation Sans" font-size="20.5" font-weight="normal" fill="#cccccc" textLength="40.39" lengthAdjust="spacingAndGlyphs">NaN</text>
<text x="1528.22" y="408.20" font-family="Liberation Sans" font-size="20.5" font-weight="normal" fill="#cccccc" textLength="15.71" lengthAdjust="spacingAndGlyphs">Q</text>
<text x="162.21" y="448.20" font-family="Liberation Sans" font-size="20.5" font-weight="normal" fill="#cccccc" textLength="11.23" lengthAdjust="spacingAndGlyphs">1</text>
<text x="282.90" y="448.20" font-family="Liberation Sans" font-size="20.5" font-weight="normal" fill="#cccccc" textLength="33.69" lengthAdjust="spacingAndGlyphs">893</text>
<text x="387.87" y="448.20" font-family="Liberation Sans" font-size="20.5" font-weight="normal" fill="#cccccc" textLength="11.23" lengthAdjust="spacingAndGlyphs">3</text>
<text x="530.37" y="448.20" font-family="Liberation Sans" font-size="20.5" font-weight="normal" fill="#cccccc" textLength="302.95" lengthAdjust="spacingAndGlyphs">Wilkes, Mrs. James (Ellen Needs)</text>
<text x="858.99" y="448.20" font-family="Liberation Sans" font-size="20.5" font-weight="normal" fill="#cccccc" textLength="60.61" lengthAdjust="spacingAndGlyphs">female</text>
<text x="943.59" y="448.20" font-family="Liberation Sans" font-size="20.5" font-weight="normal" fill="#cccccc" textLength="39.30" lengthAdjust="spacingAndGlyphs">47.0</text>
<text x="1050.87" y="448.20" font-family="Liberation Sans" font-size="20.5" font-weight="normal" fill="#cccccc" textLength="11.23" lengthAdjust="spacingAndGlyphs">1</text>
<text x="1129.16" y="448.20" font-family="Liberation Sans" font-size="20.5" font-weight="normal" fill="#cccccc" textLength="11.23" lengthAdjust="spacingAndGlyphs">0</text>
<text x="1176.81" y="448.20" font-family="Liberation Sans" font-size="20.5" font-weight="normal" fill="#cccccc" textLength="67.38" lengthAdjust="spacingAndGlyphs">363272</text>
<text x="1278.63" y="448.20" font-family="Liberation Sans" font-size="20.5" font-weight="normal" fill="#cccccc" textLength="61.76" lengthAdjust="spacingAndGlyphs">7.0000</text>
<text x="1380.80" y="448.20" font-family="Liberation Sans" font-size="20.5" font-weight="normal" fill="#cccccc" textLength="40.39" lengthAdjust="spacingAndGlyphs">NaN</text>
<text x="1530.19" y="448.20" font-family="Liberation Sans" font-size="20.5" font-weight="normal" fill="#cccccc" textLength="13.47" lengthAdjust="spacingAndGlyphs">S</text>
<text x="162.21" y="488.20" font-family="Liberation Sans" font-size="20.5" font-weight="normal" fill="#cccccc" textLength="11.23" lengthAdjust="spacingAndGlyphs">2</text>
<text x="282.90" y="488.20" font-family="Liberation Sans" font-size="20.5" font-weight="normal" fill="#cccccc" textLength="33.69" lengthAdjust="spacingAndGlyphs">894</text>
<text x="387.87" y="488.20" font-family="Liberation Sans" font-size="20.5" font-weight="normal" fill="#cccccc" textLength="11.23" lengthAdjust="spacingAndGlyphs">2</text>
<text x="590.40" y="488.20" font-family="Liberation Sans" font-size="20.5" font-weight="normal" fill="#cccccc" textLength="242.35" lengthAdjust="spacingAndGlyphs">Myles, Mr. Thomas Francis</text>
<text x="875.83" y="488.20" font-family="Liberation Sans" font-size="20.5" font-weight="normal" fill="#cccccc" textLength="43.77" lengthAdjust="spacingAndGlyphs">male</text>
<text x="943.59" y="488.20" font-family="Liberation Sans" font-size="20.5" font-weight="normal" fill="#cccccc" textLength="39.30" lengthAdjust="spacingAndGlyphs">62.0</text>
<text x="1050.87" y="488.20" font-family="Liberation Sans" font-size="20.5" font-weight="normal" fill="#cccccc" textLength="11.23" lengthAdjust="spacingAndGlyphs">0</text>
<text x="1129.16" y="488.20" font-family="Liberation Sans" font-size="20.5" font-weight="normal" fill="#cccccc" textLength="11.23" lengthAdjust="spacingAndGlyphs">0</text>
<text x="1176.81" y="488.20" font-family="Liberation Sans" font-size="20.5" font-weight="normal" fill="#cccccc" textLength="67.38" lengthAdjust="spacingAndGlyphs">240276</text>
<text x="1278.63" y="488.20" font-family="Liberation Sans" font-size="20.5" font-weight="normal" fill="#cccccc" textLength="61.76" lengthAdjust="spacingAndGlyphs">9.6875</text>
<text x="1380.80" y="488.20" font-family="Liberation Sans" font-size="20.5" font-weight="normal" fill="#cccccc" textLength="40.39" lengthAdjust="spacingAndGlyphs">NaN</text>
<text x="1528.22" y="488.20" font-family="Liberation Sans" font-size="20.5" font-weight="normal" fill="#cccccc" textLength="15.71" lengthAdjust="spacingAndGlyphs">Q</text>
<text x="163.20" y="528.20" font-family="Liberation Sans" font-size="20.5" font-weight="normal" fill="#cccccc" textLength="11.23" lengthAdjust="spacingAndGlyphs">3</text>
<text x="282.90" y="528.20" font-family="Liberation Sans" font-size="20.5" font-weight="normal" fill="#cccccc" textLength="33.69" lengthAdjust="spacingAndGlyphs">895</text>
<text x="387.87" y="528.20" font-family="Liberation Sans" font-size="20.5" font-weight="normal" fill="#cccccc" textLength="11.23" lengthAdjust="spacingAndGlyphs">3</text>
<text x="694.21" y="528.20" font-family="Liberation Sans" font-size="20.5" font-weight="normal" fill="#cccccc" textLength="137.99" lengthAdjust="spacingAndGlyphs">Wirz, Mr. Albert</text>
<text x="875.83" y="528.20" font-family="Liberation Sans" font-size="20.5" font-weight="normal" fill="#cccccc" textLength="43.77" lengthAdjust="spacingAndGlyphs">male</text>
<text x="943.59" y="528.20" font-family="Liberation Sans" font-size="20.5" font-weight="normal" fill="#cccccc" textLength="39.30" lengthAdjust="spacingAndGlyphs">27.0</text>
<text x="1050.87" y="528.20" font-family="Liberation Sans" font-size="20.5" font-weight="normal" fill="#cccccc" textLength="11.23" lengthAdjust="spacingAndGlyphs">0</text>
<text x="1129.16" y="528.20" font-family="Liberation Sans" font-size="20.5" font-weight="normal" fill="#cccccc" textLength="11.23" lengthAdjust="spacingAndGlyphs">0</text>
<text x="1176.81" y="528.20" font-family="Liberation Sans" font-size="20.5" font-weight="normal" fill="#cccccc" textLength="67.38" lengthAdjust="spacingAndGlyphs">315154</text>
<text x="1278.63" y="528.20" font-family="Liberation Sans" font-size="20.5" font-weight="normal" fill="#cccccc" textLength="61.76" lengthAdjust="spacingAndGlyphs">8.6625</text>
<text x="1380.80" y="528.20" font-family="Liberation Sans" font-size="20.5" font-weight="normal" fill="#cccccc" textLength="40.39" lengthAdjust="spacingAndGlyphs">NaN</text>
<text x="1530.19" y="528.20" font-family="Liberation Sans" font-size="20.5" font-weight="normal" fill="#cccccc" textLength="13.47" lengthAdjust="spacingAndGlyphs">S</text>
<text x="163.20" y="568.20" font-family="Liberation Sans" font-size="20.5" font-weight="normal" fill="#cccccc" textLength="11.23" lengthAdjust="spacingAndGlyphs">4</text>
<text x="282.90" y="568.20" font-family="Liberation Sans" font-size="20.5" font-weight="normal" fill="#cccccc" textLength="33.69" lengthAdjust="spacingAndGlyphs">896</text>
<text x="387.87" y="568.20" font-family="Liberation Sans" font-size="20.5" font-weight="normal" fill="#cccccc" textLength="11.23" lengthAdjust="spacingAndGlyphs">3</text>
<text x="429.30" y="568.20" font-family="Liberation Sans" font-size="20.5" font-weight="normal" fill="#cccccc" textLength="404.02" lengthAdjust="spacingAndGlyphs">Hirvonen, Mrs. Alexander (Helga E Lindqvist)</text>
<text x="858.99" y="568.20" font-family="Liberation Sans" font-size="20.5" font-weight="normal" fill="#cccccc" textLength="60.61" lengthAdjust="spacingAndGlyphs">female</text>
<text x="943.59" y="568.20" font-family="Liberation Sans" font-size="20.5" font-weight="normal" fill="#cccccc" textLength="39.30" lengthAdjust="spacingAndGlyphs">22.0</text>
<text x="1050.87" y="568.20" font-family="Liberation Sans" font-size="20.5" font-weight="normal" fill="#cccccc" textLength="11.23" lengthAdjust="spacingAndGlyphs">1</text>
<text x="1129.16" y="568.20" font-family="Liberation Sans" font-size="20.5" font-weight="normal" fill="#cccccc" textLength="11.23" lengthAdjust="spacingAndGlyphs">1</text>
<text x="1165.58" y="568.20" font-family="Liberation Sans" font-size="20.5" font-weight="normal" fill="#cccccc" textLength="78.61" lengthAdjust="spacingAndGlyphs">3101298</text>
<text x="1267.40" y="568.20" font-family="Liberation Sans" font-size="20.5" font-weight="normal" fill="#cccccc" textLength="72.99" lengthAdjust="spacingAndGlyphs">12.2875</text>
<text x="1380.80" y="568.20" font-family="Liberation Sans" font-size="20.5" font-weight="normal" fill="#cccccc" textLength="40.39" lengthAdjust="spacingAndGlyphs">NaN</text>
<text x="1530.19" y="568.20" font-family="Liberation Sans" font-size="20.5" font-weight="normal" fill="#cccccc" textLength="13.47" lengthAdjust="spacingAndGlyphs">S</text>
<g opacity="0.33" fill="none" stroke="#ffffff" stroke-linecap="round">
<path d="M866.6 923.5 A16.2 16.2 0 1 0 879.4 949.7" stroke-width="10.8"/>
<rect x="879" y="944.3" width="160" height="10.8" fill="#ffffff" stroke="none"/>
<path d="M884.1 899.5 V949.7" stroke-width="9.8"/>
<circle cx="921.6" cy="933.2" r="15.3" stroke-width="10.3"/>
<path d="M961.5 949 L963.6 932.5 M983 949 L985.1 932.5 M999.5 949 L1001.8 928.4 M1016.2 949 L1018.3 925.8" stroke-width="10"/>
<circle cx="1052.4" cy="939.7" r="16.1" stroke-width="10.8"/>
<g fill="#ffffff" stroke="none">
<circle cx="913.8" cy="901.3" r="6.8"/><circle cx="929.8" cy="901.3" r="6.8"/>
<circle cx="954.1" cy="914.9" r="6.8"/><circle cx="970.4" cy="914.9" r="6.8"/>
<text x="843.2" y="991.8" font-family="Liberation Sans" font-weight="bold" font-size="38.5" textLength="233.6" lengthAdjust="spacingAndGlyphs">mostaql.com</text>
</g>
</g>

</svg>
</body></html>
